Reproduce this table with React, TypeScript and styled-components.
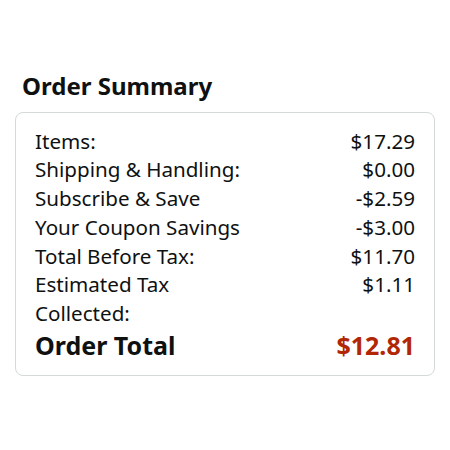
import React from "react";
import styled, { createGlobalStyle } from "styled-components";

const Global = createGlobalStyle`
  html, body { margin: 0; padding: 0; background: #fff; }
  body { font-family: "Noto Sans", "Open Sans", sans-serif; color: #0f1111; }
`;

const Page = styled.div`
  width: 450px;
  height: 450px;
  box-sizing: border-box;
  padding: 70px 15px 0 15px;
  display: flex;
  flex-direction: column;
`;

const Title = styled.h2`
  margin: 0 0 10px 7px;
  font-size: 24px;
  line-height: 32px;
  font-weight: 700;
`;

const Card = styled.div`
  border: 1px solid #d5d9d9;
  border-radius: 8px;
  padding: 13.5px 19px 13px 19px;
  display: flex;
  flex-direction: column;
`;

const Row = styled.div<{ $total?: boolean }>`
  display: flex;
  justify-content: space-between;
  align-items: ${(p) => (p.$total ? "center" : "flex-start")};
  font-size: ${(p) => (p.$total ? "25px" : "20.6px")};
  font-weight: ${(p) => (p.$total ? 700 : 400)};
  line-height: ${(p) => (p.$total ? "34px" : "28.8px")};
`;

const Label = styled.span`
  max-width: 210px;
`;

const Amount = styled.span<{ $red?: boolean }>`
  color: ${(p) => (p.$red ? "#b12704" : "#0f1111")};
  white-space: nowrap;
`;

const rows: [string, string][] = [
  ["Items:", "$17.29"],
  ["Shipping & Handling:", "$0.00"],
  ["Subscribe & Save", "-$2.59"],
  ["Your Coupon Savings", "-$3.00"],
  ["Total Before Tax:", "$11.70"],
  ["Estimated Tax Collected:", "$1.11"],
];

export default function App() {
  return (
    <>
      <Global />
      <Page>
        <Title>Order Summary</Title>
        <Card>
          {rows.map(([l, a]) => (
            <Row key={l}>
              <Label>{l}</Label>
              <Amount>{a}</Amount>
            </Row>
          ))}
          <Row $total>
            <Label>Order Total</Label>
            <Amount $red>$12.81</Amount>
          </Row>
        </Card>
      </Page>
    </>
  );
}
